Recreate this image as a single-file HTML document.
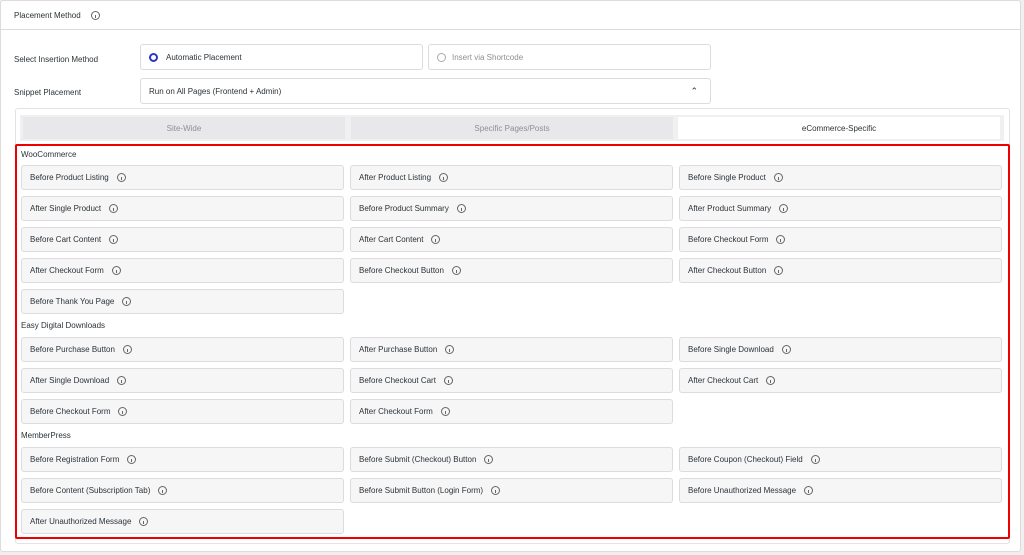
<!DOCTYPE html>
<html><head><meta charset="utf-8"><style>
*{box-sizing:border-box;margin:0;padding:0}
body{width:1024px;height:555px;background:#f0f0f1;font-family:"Liberation Sans",sans-serif;font-size:8px;color:#2c3338;position:relative;overflow:hidden}
.card{position:absolute;left:0;top:0;width:1021px;height:552px;background:#fff;border:1px solid #dcdcde;border-radius:3px}
.abs{position:absolute}
.hline{left:0;top:29px;width:1021px;height:1px;background:#dcdcde}
.inp{border:1px solid #dcdcde;border-radius:3px;background:#fff;height:26px;display:flex;align-items:center;padding-left:8px}
.i{display:inline-block;width:9px;height:9px;border:1px solid #666;border-radius:50%;margin-left:8px;position:relative;vertical-align:middle}
.i:after{content:"";position:absolute;left:3px;top:3px;width:1px;height:3px;background:#666}
.btn{position:absolute;width:323px;height:25px;background:#f6f6f7;border:1px solid #dcdcde;border-radius:3px;display:flex;align-items:center;padding-left:8px}
.lbl{position:absolute;left:21px}
.tab{position:absolute;top:117px;height:22px;display:flex;align-items:center;justify-content:center;background:#e8e8eb;color:#8c8f94}
</style></head><body>
<div class="card"></div>
<div class="abs" style="left:14px;top:11px">Placement Method <span class="i"></span></div>
<div class="abs hline"></div>
<div class="abs" style="left:14px;top:55px">Select Insertion Method</div>
<div class="abs" style="left:14px;top:88px">Snippet Placement</div>
<div class="abs inp" style="left:140px;top:44px;width:283px"><span style="width:9px;height:9px;border:2.5px solid #2b36c9;border-radius:50%;margin-right:8px"></span>Automatic Placement</div>
<div class="abs inp" style="left:428px;top:44px;width:283px;color:#8c8f94"><span style="width:9px;height:9px;border:1px solid #aaa;border-radius:50%;margin-right:6px"></span>Insert via Shortcode</div>
<div class="abs inp" style="left:140px;top:78px;width:571px">Run on All Pages (Frontend + Admin)<span style="position:absolute;right:12px;top:7px;font-size:9px">&#8963;</span></div>
<div class="abs" style="left:15px;top:108px;width:995px;height:436px;border:1px solid #e3e3e5;border-radius:3px;background:#fff"></div>
<div class="abs" style="left:20px;top:115px;width:984px;height:26px;background:#f0f0f1"></div>
<div class="tab" style="left:23px;width:322px">Site-Wide</div>
<div class="tab" style="left:351px;width:322px">Specific Pages/Posts</div>
<div class="tab" style="left:678px;width:322px;background:#fff;color:#2c3338">eCommerce-Specific</div>
<div class="abs" style="left:15px;top:144px;width:995px;height:395px;border:2px solid #e00;border-radius:2px"></div>
<div class="lbl" style="top:150px">WooCommerce</div>
<div class="btn" style="left:21px;top:165px">Before Product Listing<span class="i"></span></div>
<div class="btn" style="left:350px;top:165px">After Product Listing<span class="i"></span></div>
<div class="btn" style="left:679px;top:165px">Before Single Product<span class="i"></span></div>
<div class="btn" style="left:21px;top:196px">After Single Product<span class="i"></span></div>
<div class="btn" style="left:350px;top:196px">Before Product Summary<span class="i"></span></div>
<div class="btn" style="left:679px;top:196px">After Product Summary<span class="i"></span></div>
<div class="btn" style="left:21px;top:227px">Before Cart Content<span class="i"></span></div>
<div class="btn" style="left:350px;top:227px">After Cart Content<span class="i"></span></div>
<div class="btn" style="left:679px;top:227px">Before Checkout Form<span class="i"></span></div>
<div class="btn" style="left:21px;top:258px">After Checkout Form<span class="i"></span></div>
<div class="btn" style="left:350px;top:258px">Before Checkout Button<span class="i"></span></div>
<div class="btn" style="left:679px;top:258px">After Checkout Button<span class="i"></span></div>
<div class="btn" style="left:21px;top:289px">Before Thank You Page<span class="i"></span></div>
<div class="lbl" style="top:321px">Easy Digital Downloads</div>
<div class="btn" style="left:21px;top:337px">Before Purchase Button<span class="i"></span></div>
<div class="btn" style="left:350px;top:337px">After Purchase Button<span class="i"></span></div>
<div class="btn" style="left:679px;top:337px">Before Single Download<span class="i"></span></div>
<div class="btn" style="left:21px;top:368px">After Single Download<span class="i"></span></div>
<div class="btn" style="left:350px;top:368px">Before Checkout Cart<span class="i"></span></div>
<div class="btn" style="left:679px;top:368px">After Checkout Cart<span class="i"></span></div>
<div class="btn" style="left:21px;top:399px">Before Checkout Form<span class="i"></span></div>
<div class="btn" style="left:350px;top:399px">After Checkout Form<span class="i"></span></div>
<div class="lbl" style="top:431px">MemberPress</div>
<div class="btn" style="left:21px;top:447px">Before Registration Form<span class="i"></span></div>
<div class="btn" style="left:350px;top:447px">Before Submit (Checkout) Button<span class="i"></span></div>
<div class="btn" style="left:679px;top:447px">Before Coupon (Checkout) Field<span class="i"></span></div>
<div class="btn" style="left:21px;top:478px">Before Content (Subscription Tab)<span class="i"></span></div>
<div class="btn" style="left:350px;top:478px">Before Submit Button (Login Form)<span class="i"></span></div>
<div class="btn" style="left:679px;top:478px">Before Unauthorized Message<span class="i"></span></div>
<div class="btn" style="left:21px;top:509px">After Unauthorized Message<span class="i"></span></div>
</body></html>
